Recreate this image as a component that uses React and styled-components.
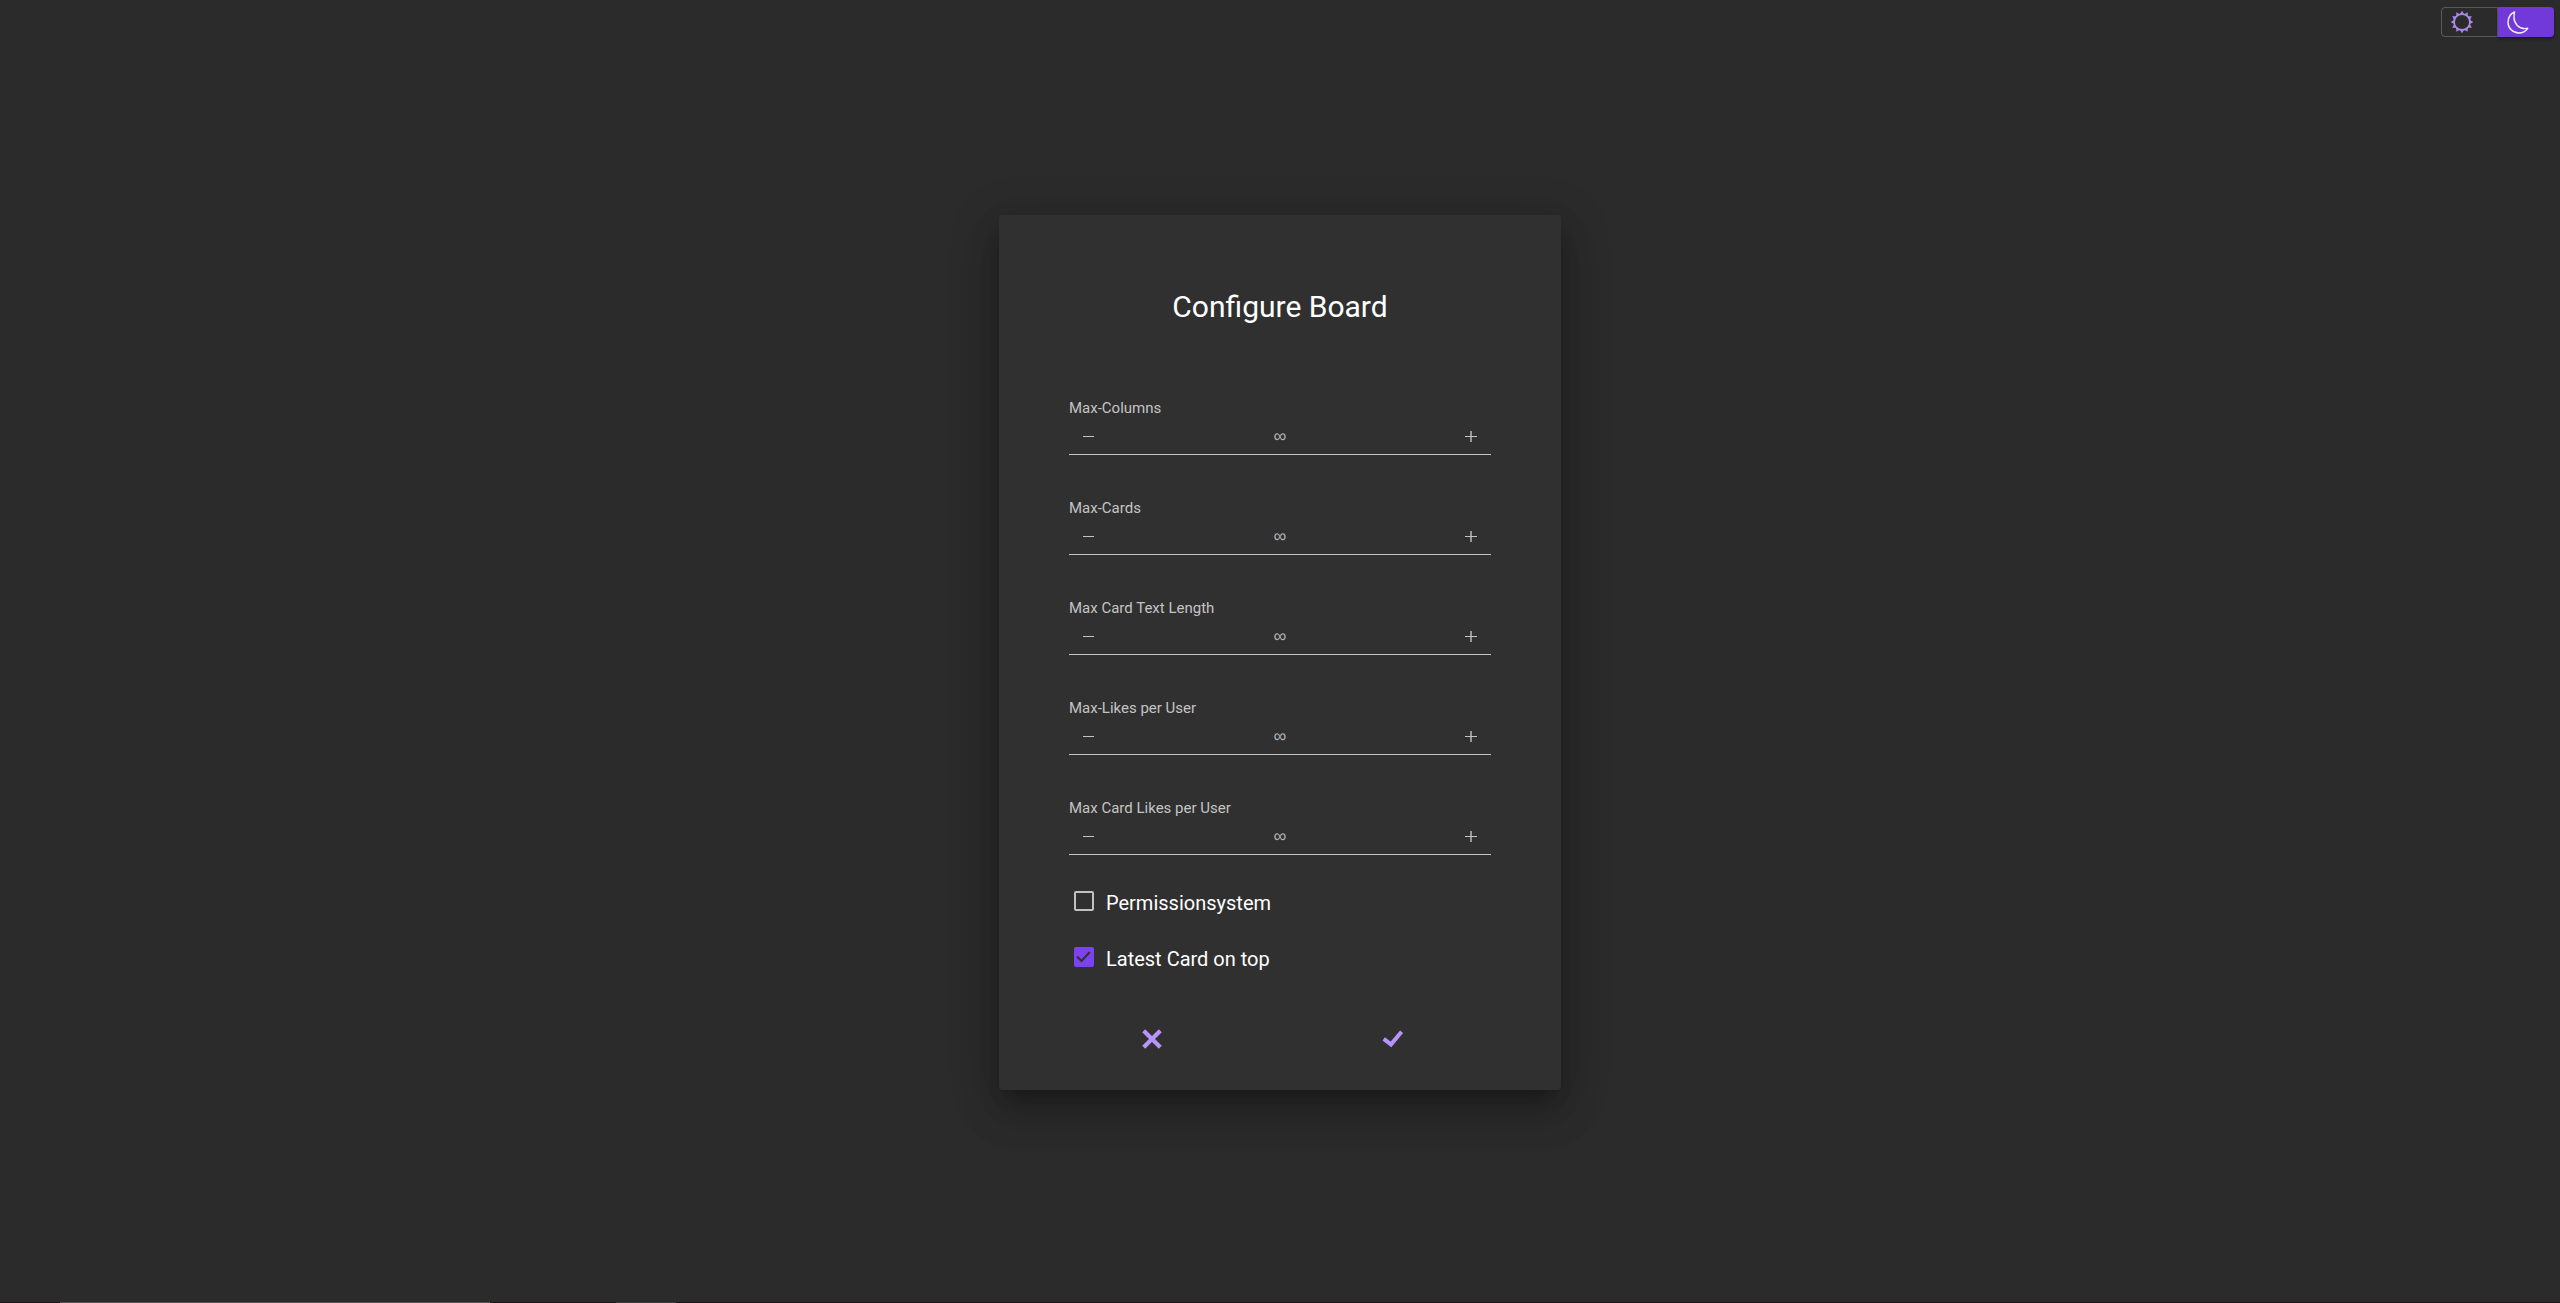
import React, { useState } from "react";
import styled, { createGlobalStyle } from "styled-components";

const GlobalStyle = createGlobalStyle`
  *, *::before, *::after { box-sizing: border-box; }
  body {
    margin: 0;
    background: #2b2b2b;
    color: #fff;
    font-family: Roboto, "Liberation Sans", sans-serif;
  }
`;

const Page = styled.div`
  display: flex;
  flex-direction: column;
  min-height: 100vh;
`;

const TopBar = styled.header`
  display: flex;
  justify-content: flex-end;
  padding: 7px 6px 0;
`;

const ThemeToggle = styled.div`
  display: flex;
  height: 30px;
`;

const ThemeButton = styled.button`
  display: flex;
  align-items: center;
  width: ${(p) => (p.$side === "left" ? "57px" : "56px")};
  padding: 0 0 0 9px;
  cursor: pointer;
  border: ${(p) => (p.$active ? "0" : "1px solid #5a5a5a")};
  border-radius: ${(p) => (p.$side === "left" ? "4px 0 0 4px" : "0 4px 4px 0")};
  background: ${(p) => (p.$active ? "#7139da" : "transparent")};
  color: ${(p) => (p.$active ? "#f4effd" : "#a98ae6")};
  box-shadow: ${(p) => (p.$active ? "0 2px 3px rgba(0, 0, 0, 0.35)" : "none")};
`;

const Main = styled.main`
  display: flex;
  flex: 1;
  justify-content: center;
  align-items: flex-start;
  padding: 178px 16px 0;
`;

const Card = styled.form`
  width: 562px;
  max-width: 100%;
  padding: 70px 70px 32px;
  border-radius: 4px;
  background: #303030;
  box-shadow:
    0 11px 15px -7px rgba(0, 0, 0, 0.28),
    0 24px 38px 3px rgba(0, 0, 0, 0.14),
    0 9px 46px 8px rgba(0, 0, 0, 0.14);
`;

const Title = styled.h1`
  margin: 0 0 70px;
  font-size: 30px;
  line-height: 44px;
  font-weight: 400;
  text-align: center;
`;

const Field = styled.div`
  height: 56px;
  margin-bottom: 44px;
  border-bottom: 1px solid #c4c4c4;
`;

const FieldLabel = styled.label`
  display: block;
  font-size: 15px;
  line-height: 18px;
  color: #c4c4c4;
`;

const Stepper = styled.div`
  display: flex;
  align-items: center;
  justify-content: space-between;
  height: 38px;
`;

const StepButton = styled.button`
  display: flex;
  align-items: center;
  justify-content: center;
  width: 40px;
  height: 36px;
  padding: 0;
  border: 0;
  background: none;
  color: #c4c4c4;
  cursor: pointer;
`;

const StepValue = styled.input`
  flex: 1;
  min-width: 0;
  padding: 0;
  border: 0;
  outline: 0;
  background: none;
  color: #b4b4b4;
  font: 400 18px "Liberation Sans", Arial, sans-serif;
  text-align: center;
`;

const Options = styled.div`
  display: flex;
  flex-direction: column;
  gap: 32px;
  margin-top: -8px;
  padding-left: 5px;
`;

const Option = styled.label`
  display: flex;
  align-items: flex-start;
  gap: 12px;
  height: 24px;
  font-size: 20px;
  line-height: 24px;
  cursor: pointer;
`;

const TickBox = styled.span`
  display: grid;
  width: 20px;
  height: 20px;
  border-radius: 3px;

  & > * {
    grid-area: 1 / 1;
  }
`;

const Tick = styled.input`
  appearance: none;
  width: 20px;
  height: 20px;
  margin: 0;
  border: 2px solid #c1c1c1;
  border-radius: 2px;
  cursor: pointer;

  &:checked {
    border-color: #7c42f0;
    background: #7c42f0;
  }
`;

const TickMark = styled.svg`
  visibility: ${(p) => (p.$shown ? "visible" : "hidden")};
  pointer-events: none;
`;

const Actions = styled.div`
  display: flex;
  justify-content: space-around;
  margin: 49px -22px 0 -38px;
`;

const ActionButton = styled.button`
  display: flex;
  align-items: center;
  justify-content: center;
  width: 64px;
  height: 38px;
  padding: 0;
  border: 0;
  background: none;
  color: #b794f9;
  cursor: pointer;
`;

const BottomEdge = styled.footer`
  display: flex;
  height: 1px;
  background: #1c141a;
`;

const EdgeSegment = styled.div`
  width: ${(p) => p.$width}px;
  background: ${(p) => p.$color};
`;

const rays = Array.from({ length: 12 }, (_, i) => i * 30);

const SunIcon = () => (
  <svg width="22" height="22" viewBox="0 0 22 22" aria-hidden="true">
    <circle cx="11" cy="11" r="7.900" fill="none" stroke="currentColor" strokeWidth="1.700" />
    {rays.map((deg) => (
      <path key={deg} d="M8.900 3.200 11-.3l2.100 3.500z" fill="currentColor" transform={`rotate(${deg} 11 11)`} />
    ))}
  </svg>
);

const MoonIcon = () => (
  <svg width="22" height="23" viewBox="0 0 22 23" fill="none" stroke="currentColor" strokeWidth="1.4" strokeLinejoin="round" aria-hidden="true">
    <path d="M7.6 1C3.6 2.700 1 6.500 1 11.200 1 17.200 5.800 22 11.800 22c3.700 0 7-1.900 8.900-4.700-1 .2-1.700.3-2.700.3C11.900 17.600 7 12.700 7 6.600c0-2 .1-3.700.6-5.600z" />
  </svg>
);

const StepField = ({ id, label }) => {
  const [value, setValue] = useState(0);
  return (
    <Field>
      <FieldLabel htmlFor={id}>{label}</FieldLabel>
      <Stepper>
        <StepButton type="button" aria-label={`Decrease ${label}`} onClick={() => setValue(Math.max(0, value - 1))}>
          <svg width="12" height="12" viewBox="0 0 12 12" aria-hidden="true">
            <path d="M0 6.500h11" stroke="currentColor" />
          </svg>
        </StepButton>
        <StepValue id={id} readOnly value={value === 0 ? "∞" : value} />
        <StepButton type="button" aria-label={`Increase ${label}`} onClick={() => setValue(value + 1)}>
          <svg width="12" height="12" viewBox="0 0 12 12" aria-hidden="true">
            <path d="M0 6.500h12" stroke="currentColor" />
            <path d="M6 1v11" stroke="currentColor" strokeWidth="1.400" />
          </svg>
        </StepButton>
      </Stepper>
    </Field>
  );
};

const CheckOption = ({ label, initial }) => {
  const [checked, setChecked] = useState(initial);
  return (
    <Option>
      <TickBox>
        <Tick type="checkbox" checked={checked} onChange={(e) => setChecked(e.target.checked)} />
        <TickMark $shown={checked} width="20" height="20" viewBox="0 0 20 20" aria-hidden="true">
          <path d="M3 9.500 7.500 14 15.800 5" fill="none" stroke="#303030" strokeWidth="2" />
        </TickMark>
      </TickBox>
      {label}
    </Option>
  );
};

const fields = [
  ["max-columns", "Max-Columns"],
  ["max-cards", "Max-Cards"],
  ["max-card-text", "Max Card Text Length"],
  ["max-likes", "Max-Likes per User"],
  ["max-card-likes", "Max Card Likes per User"],
];

export default function App() {
  const [dark, setDark] = useState(true);
  return (
    <>
      <GlobalStyle />
      <Page>
        <TopBar>
          <ThemeToggle>
            <ThemeButton type="button" $side="left" $active={!dark} aria-label="Light theme" onClick={() => setDark(false)}>
              <SunIcon />
            </ThemeButton>
            <ThemeButton type="button" $side="right" $active={dark} aria-label="Dark theme" onClick={() => setDark(true)}>
              <MoonIcon />
            </ThemeButton>
          </ThemeToggle>
        </TopBar>
        <Main>
          <Card onSubmit={(e) => e.preventDefault()}>
            <Title>Configure Board</Title>
            {fields.map(([id, label]) => (
              <StepField key={id} id={id} label={label} />
            ))}
            <Options>
              <CheckOption label="Permissionsystem" initial={false} />
              <CheckOption label="Latest Card on top" initial={true} />
            </Options>
            <Actions>
              <ActionButton type="button" aria-label="Cancel">
                <svg width="20" height="20" viewBox="0 0 20 20" aria-hidden="true">
                  <path d="M1.700 1.700 18.300 18.300M18.300 1.700 1.700 18.300" stroke="currentColor" strokeWidth="4.200" />
                </svg>
              </ActionButton>
              <ActionButton type="submit" aria-label="Confirm">
                <svg width="22" height="18" viewBox="0 0 22 18" aria-hidden="true">
                  <path d="M1.700 8.800 9 14.400 19.600 1.700" fill="none" stroke="currentColor" strokeWidth="4" />
                </svg>
              </ActionButton>
            </Actions>
          </Card>
        </Main>
        <BottomEdge>
          <EdgeSegment $width={60} $color="#1c141a" />
          <EdgeSegment $width={430} $color="#575356" />
          <EdgeSegment $width={126} $color="#1c141a" />
          <EdgeSegment $width={60} $color="#3d3a3c" />
        </BottomEdge>
      </Page>
    </>
  );
}
